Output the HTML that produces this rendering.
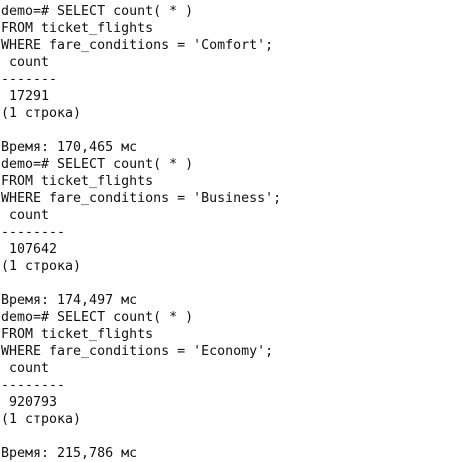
<!DOCTYPE html>
<html><head><meta charset="utf-8"><style>
html,body{margin:0;padding:0;background:#fff;width:467px;height:462px;overflow:hidden}
pre{margin:0;position:absolute;left:1px;top:3px;font-family:"DejaVu Sans Mono",monospace;font-size:13.3px;line-height:17px;color:#111}
</style></head><body><pre>demo=# SELECT count( * )
FROM ticket_flights
WHERE fare_conditions = 'Comfort';
 count
-------
 17291
(1 строка)

Время: 170,465 мс
demo=# SELECT count( * )
FROM ticket_flights
WHERE fare_conditions = 'Business';
 count
--------
 107642
(1 строка)

Время: 174,497 мс
demo=# SELECT count( * )
FROM ticket_flights
WHERE fare_conditions = 'Economy';
 count
--------
 920793
(1 строка)

Время: 215,786 мс</pre></body></html>
